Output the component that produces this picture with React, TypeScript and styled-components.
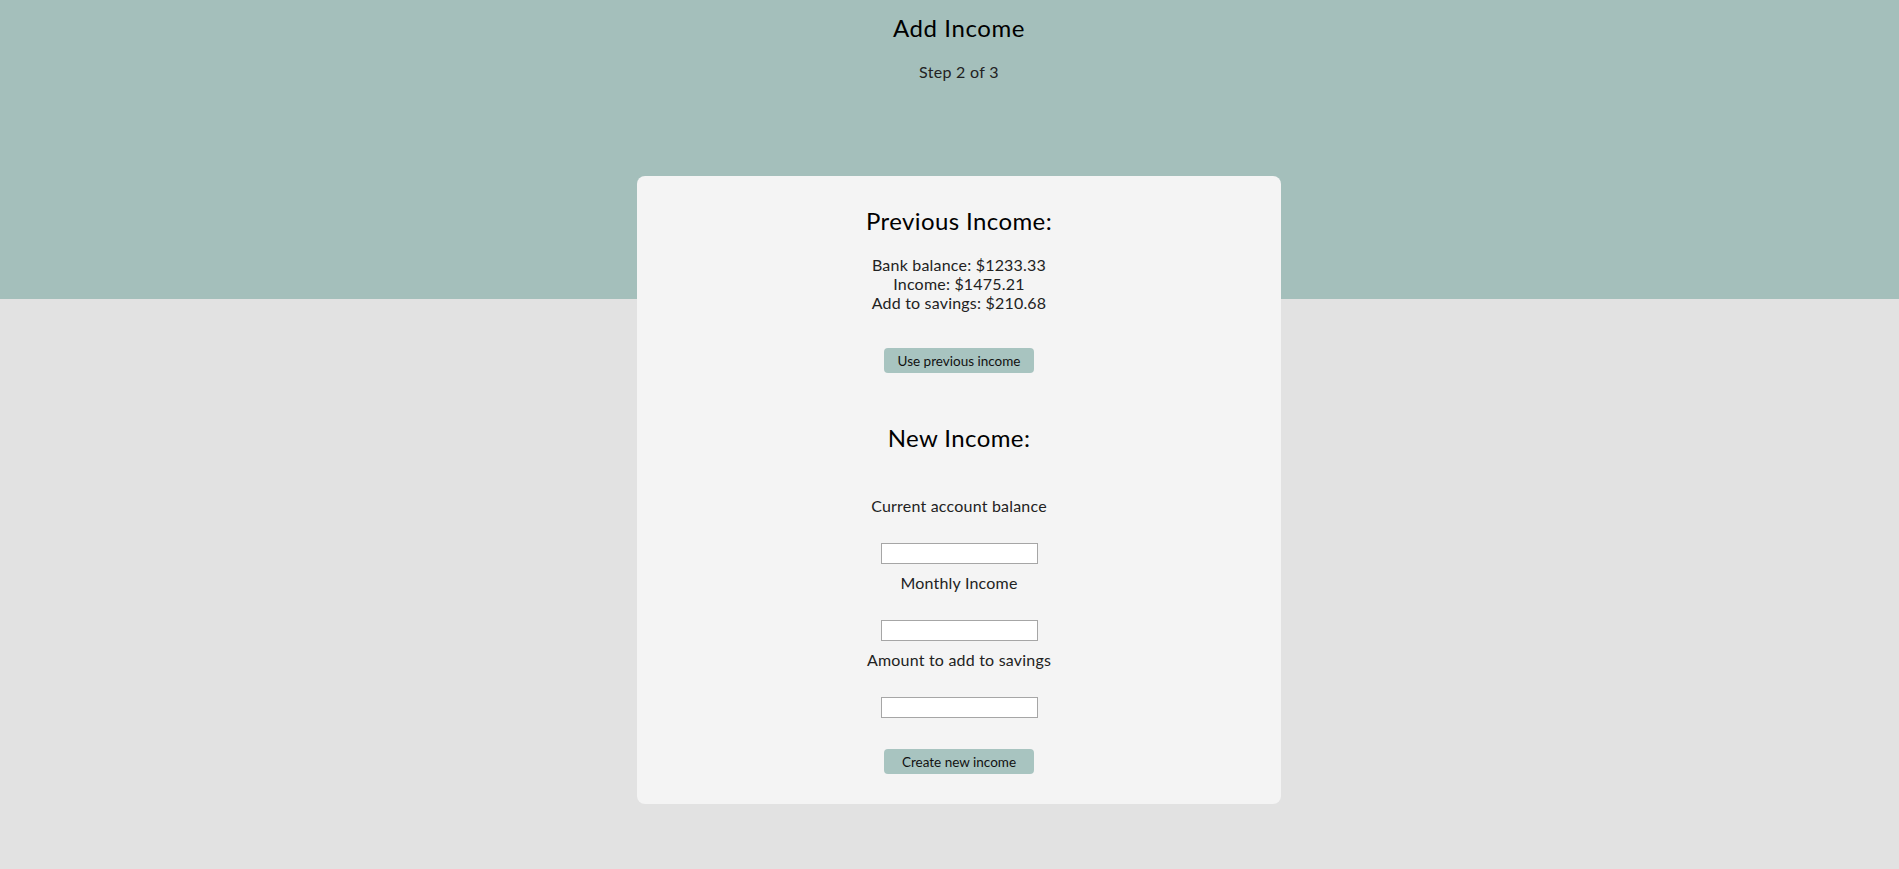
import React from "react";
import styled, { createGlobalStyle } from "styled-components";

const GlobalStyle = createGlobalStyle`
  html, body {
    margin: 0;
    padding: 0;
    background: #e2e2e2;
    font-family: Lato, "Liberation Sans", sans-serif;
    color: #222;
  }
  * { box-sizing: border-box; }
`;

const Header = styled.header`
  height: 299px;
  background: #a4bfbb;
  padding: 13px 0 0 19px;
  text-align: center;
`;

const Title = styled.h1`
  margin: 0;
  font-size: 24px;
  line-height: 29px;
  font-weight: 400;
  color: #000;
  letter-spacing: 0.6px;
`;

const Step = styled.p`
  margin: 20px 0 0;
  font-size: 16px;
  line-height: 19px;
  font-weight: 400;
  color: #222;
  letter-spacing: 0.3px;
`;

const Main = styled.main`
  display: flex;
  justify-content: center;
  padding-left: 19px;
  margin-top: -123px;
`;

const Card = styled.section`
  width: 644px;
  background: #f4f4f4;
  border-radius: 8px;
  padding: 30px 0 30px;
  display: flex;
  flex-direction: column;
  align-items: center;
  text-align: center;
`;

const Heading = styled.h2<{ $mt?: number }>`
  margin: ${(p) => p.$mt ?? 0}px 0 0;
  font-size: 24px;
  line-height: 29px;
  font-weight: 400;
  color: #000;
  letter-spacing: 0.4px;
`;

const Info = styled.div`
  margin-top: 20px;
  font-size: 16px;
  line-height: 19px;
  font-weight: 400;
  letter-spacing: 0.2px;
`;

const Line = styled.div``;

const Button = styled.button<{ $mt: number }>`
  margin-top: ${(p) => p.$mt}px;
  width: 150px;
  height: 25px;
  border: none;
  border-radius: 4px;
  background: #a8c4c0;
  color: #111;
  font-family: Lato, "Liberation Sans", sans-serif;
  font-size: 13.5px;
  font-weight: 400;
  padding: 0;
  cursor: pointer;
`;

const Label = styled.label<{ $mt: number }>`
  display: block;
  margin-top: ${(p) => p.$mt}px;
  font-size: 16px;
  line-height: 19px;
  font-weight: 400;
  letter-spacing: 0.2px;
`;

const Input = styled.input`
  display: block;
  margin-top: 28px;
  width: 157px;
  height: 21px;
  border: 1px solid #a6a6a6;
  background: #fff;
  padding: 1px 2px;
  font-size: 13px;
`;

export default function App() {
  return (
    <>
      <GlobalStyle />
      <Header>
        <Title>Add Income</Title>
        <Step>Step 2 of 3</Step>
      </Header>
      <Main>
        <Card>
          <Heading>Previous Income:</Heading>
          <Info>
            <Line>Bank balance: $1233.33</Line>
            <Line>Income: $1475.21</Line>
            <Line>Add to savings: $210.68</Line>
          </Info>
          <Button $mt={36}>Use previous income</Button>
          <Heading $mt={50}>New Income:</Heading>
          <Label $mt={44} htmlFor="balance">Current account balance</Label>
          <Input id="balance" type="text" />
          <Label $mt={9} htmlFor="income">Monthly Income</Label>
          <Input id="income" type="text" />
          <Label $mt={9} htmlFor="savings">Amount to add to savings</Label>
          <Input id="savings" type="text" />
          <Button $mt={31}>Create new income</Button>
        </Card>
      </Main>
    </>
  );
}
